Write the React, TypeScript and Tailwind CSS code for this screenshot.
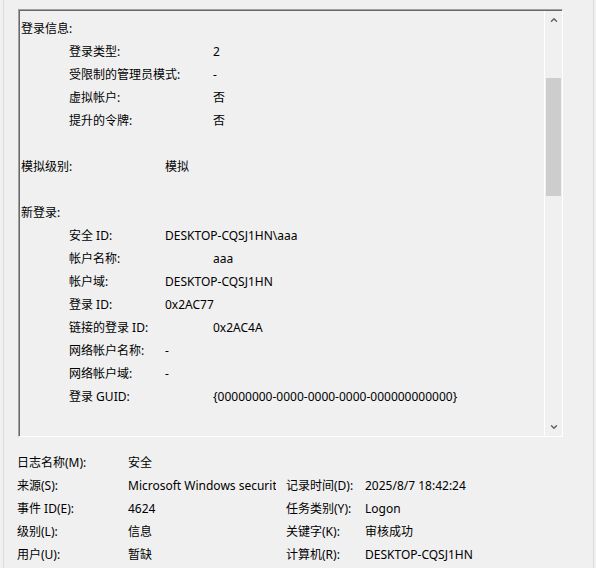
import { ChevronUp, ChevronDown } from "lucide-react";

const font = { fontFamily: "'Segoe UI', 'Noto Sans', 'Noto Sans CJK SC', sans-serif" };

type Row = { label?: string; value?: string; indent?: boolean; wide?: boolean };

const rows: Row[] = [
  { label: "登录信息:" },
  { label: "登录类型:", value: "2", indent: true, wide: true },
  { label: "受限制的管理员模式:", value: "-", indent: true, wide: true },
  { label: "虚拟帐户:", value: "否", indent: true, wide: true },
  { label: "提升的令牌:", value: "否", indent: true, wide: true },
  {},
  { label: "模拟级别:", value: "模拟" },
  {},
  { label: "新登录:" },
  { label: "安全 ID:", value: "DESKTOP-CQSJ1HN\\aaa", indent: true },
  { label: "帐户名称:", value: "aaa", indent: true, wide: true },
  { label: "帐户域:", value: "DESKTOP-CQSJ1HN", indent: true },
  { label: "登录 ID:", value: "0x2AC77", indent: true },
  { label: "链接的登录 ID:", value: "0x2AC4A", indent: true, wide: true },
  { label: "网络帐户名称:", value: "-", indent: true },
  { label: "网络帐户域:", value: "-", indent: true },
  { label: "登录 GUID:", value: "{00000000-0000-0000-0000-000000000000}", indent: true, wide: true },
];

const props: [string, string, string?, string?][] = [
  ["日志名称(M):", "安全"],
  ["来源(S):", "Microsoft Windows security auditing.", "记录时间(D):", "2025/8/7 18:42:24"],
  ["事件 ID(E):", "4624", "任务类别(Y):", "Logon"],
  ["级别(L):", "信息", "关键字(K):", "审核成功"],
  ["用户(U):", "暂缺", "计算机(R):", "DESKTOP-CQSJ1HN"],
];

function MessageRow({ row }: { row: Row }) {
  if (!row.label) return <div className="h-[23px]" />;
  const labelWidth = row.indent ? (row.wide ? "w-[144px]" : "w-[96px]") : "w-[144px]";
  return (
    <div className={`flex h-[23px] items-center whitespace-nowrap ${row.indent ? "pl-[49px]" : "pl-px"}`}>
      <span className={`${labelWidth} shrink-0`}>{row.label}</span>
      {row.value && <span>{row.value}</span>}
    </div>
  );
}

export default function App() {
  return (
    <div className="w-[596px] h-[568px] bg-[#f0f0f0] overflow-hidden pl-[3px] text-[12px] text-black" style={font}>
      <div className="h-full w-[591px] border-l border-r border-[#dcdcdc] pl-[14px] pt-[9px]">
        <div className="w-[545px] h-[428px] border-l border-t border-[#a0a0a0] border-r border-b border-r-white border-b-white">
          <div className="h-full flex border-l border-t border-[#696969] border-r-0 border-b-0">
            <div className="flex-1 overflow-hidden pt-[6px]">
              {rows.map((r, i) => (
                <MessageRow key={i} row={r} />
              ))}
            </div>
            <div className="w-[18px] h-full border-l border-white flex flex-col">
              <div className="h-[18px] flex items-center justify-center text-[#606060]">
                <ChevronUp size={10} strokeWidth={3.4} />
              </div>
              <div className="h-[49px]" />
              <div className="h-[118px] ml-px mr-px bg-[#cdcdcd]" />
              <div className="flex-1" />
              <div className="h-[18px] flex items-center justify-center text-[#606060]">
                <ChevronDown size={10} strokeWidth={3.4} />
              </div>
            </div>
          </div>
        </div>
        <div className="mt-[14px] -ml-[1px]">
          {props.map(([l1, v1, l2, v2], i) => (
            <div key={i} className="flex h-[23px] items-center whitespace-nowrap">
              <span className="w-[111px] shrink-0">{l1}</span>
              <span className="w-[148px] shrink-0 overflow-hidden">{v1}</span>
              <span className="w-[10px] shrink-0" />
              <span className="w-[79px] shrink-0">{l2}</span>
              <span>{v2}</span>
            </div>
          ))}
        </div>
      </div>
    </div>
  );
}
